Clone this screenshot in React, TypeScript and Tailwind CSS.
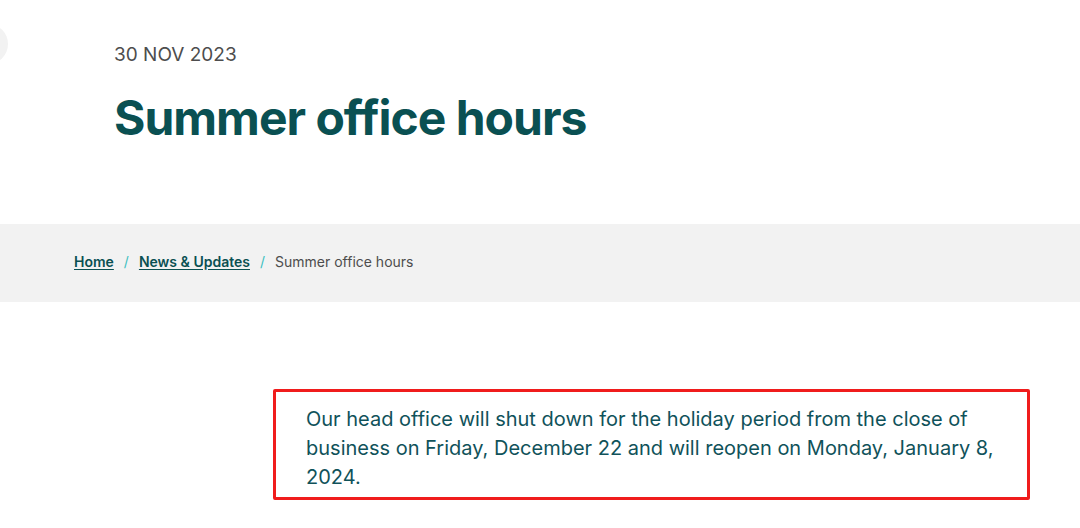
import React from 'react';

const font = { fontFamily: 'Inter, Lato, sans-serif' };

export default function App() {
  return (
    <div className="relative w-[1080px] h-[528px] overflow-hidden bg-white" style={font}>
      {/* faint circle at the left edge */}
      <div className="absolute -left-[32px] top-[24px] w-[40px] h-[40px] rounded-full bg-[#f2f2f2]" />

      {/* Header */}
      <header className="pl-[114px] pt-[42px] h-[224px]">
        <div className="text-[19px] leading-[26px] text-[#4d4d4d]">30 NOV 2023</div>
        <h1 className="mt-[22px] text-[48px] leading-[56px] font-bold tracking-[-1px] text-[#0a5052]">
          Summer office hours
        </h1>
      </header>

      {/* Breadcrumb */}
      <nav className="h-[78px] bg-[#f2f2f2] pl-[74px] pb-[3px] flex items-center text-[14px] text-[#4d4d4d]">
        <a href="#" className="font-semibold text-[#0a5052] underline underline-offset-2">Home</a>
        <span className="mx-[10px] text-[#3cbfbf]">/</span>
        <a href="#" className="font-semibold text-[#0a5052] underline underline-offset-2">News &amp; Updates</a>
        <span className="mx-[10px] text-[#3cbfbf]">/</span>
        <span>Summer office hours</span>
      </nav>

      {/* Body */}
      <section className="pl-[273px] pt-[87px]">
        <div className="w-[757px] h-[111px] border-[3px] border-[#f01c1c] rounded-[2px] pl-[30px] pr-[30px] pt-[13px]">
          <p className="text-[20px] leading-[29px] text-[#10525a]">
            Our head office will shut down for the holiday period from the close of business on Friday, December 22 and
            will reopen on Monday, January 8, 2024.
          </p>
        </div>
      </section>
    </div>
  );
}
